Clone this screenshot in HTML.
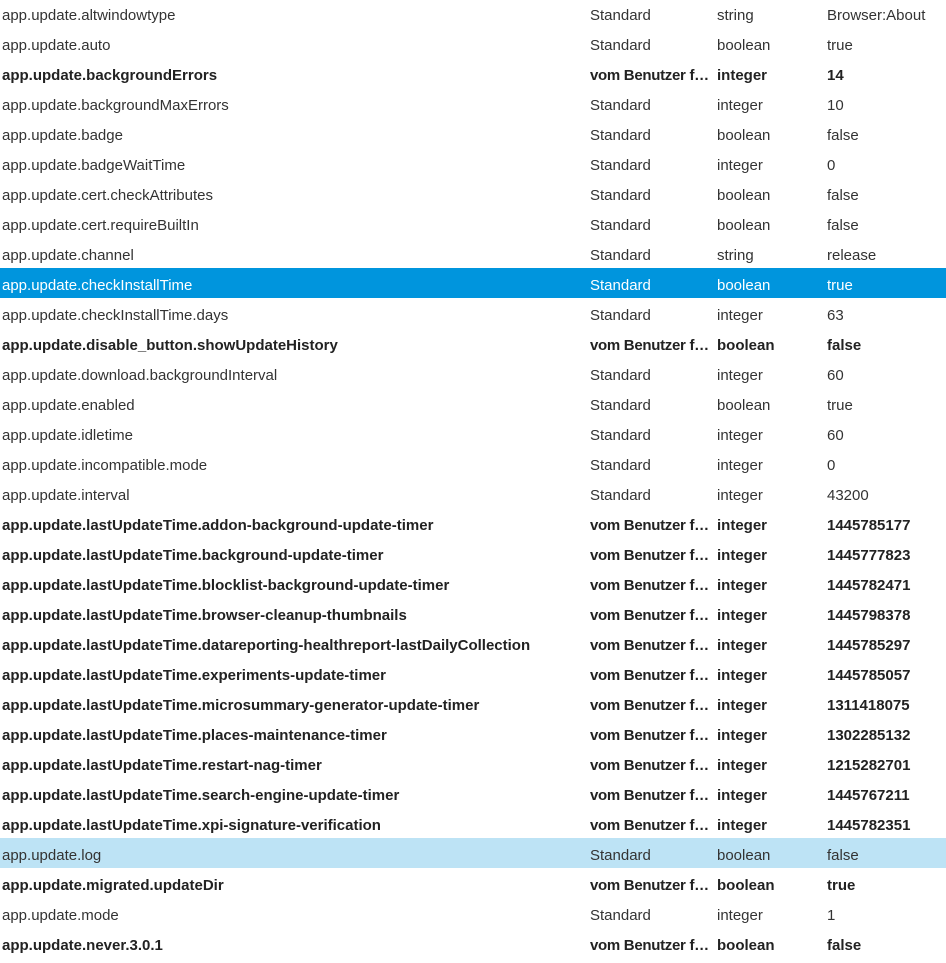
<!DOCTYPE html>
<html><head><meta charset="utf-8"><style>
html,body{margin:0;padding:0;background:#fff;width:946px;height:963px;overflow:hidden}
body{font-family:"Liberation Sans",sans-serif;font-size:15px;color:#333}
.w{margin-top:-2px}
.r{position:relative;height:30px;line-height:30px;white-space:nowrap}
.r span{position:absolute;top:3px}
.c1{left:2px}.c2{left:590px}.c3{left:717px}.c4{left:827px}
.b{font-weight:bold;color:#222}
.b .c2{letter-spacing:-0.3px}
.s{background:#0095dd;color:#fff}
.l{background:#bde3f5}
</style></head><body><div class="w">
<div class="r"><span class="c1">app.update.altwindowtype</span><span class="c2">Standard</span><span class="c3">string</span><span class="c4">Browser:About</span></div>
<div class="r"><span class="c1">app.update.auto</span><span class="c2">Standard</span><span class="c3">boolean</span><span class="c4">true</span></div>
<div class="r b"><span class="c1">app.update.backgroundErrors</span><span class="c2">vom Benutzer f…</span><span class="c3">integer</span><span class="c4">14</span></div>
<div class="r"><span class="c1">app.update.backgroundMaxErrors</span><span class="c2">Standard</span><span class="c3">integer</span><span class="c4">10</span></div>
<div class="r"><span class="c1">app.update.badge</span><span class="c2">Standard</span><span class="c3">boolean</span><span class="c4">false</span></div>
<div class="r"><span class="c1">app.update.badgeWaitTime</span><span class="c2">Standard</span><span class="c3">integer</span><span class="c4">0</span></div>
<div class="r"><span class="c1">app.update.cert.checkAttributes</span><span class="c2">Standard</span><span class="c3">boolean</span><span class="c4">false</span></div>
<div class="r"><span class="c1">app.update.cert.requireBuiltIn</span><span class="c2">Standard</span><span class="c3">boolean</span><span class="c4">false</span></div>
<div class="r"><span class="c1">app.update.channel</span><span class="c2">Standard</span><span class="c3">string</span><span class="c4">release</span></div>
<div class="r s"><span class="c1">app.update.checkInstallTime</span><span class="c2">Standard</span><span class="c3">boolean</span><span class="c4">true</span></div>
<div class="r"><span class="c1">app.update.checkInstallTime.days</span><span class="c2">Standard</span><span class="c3">integer</span><span class="c4">63</span></div>
<div class="r b"><span class="c1">app.update.disable_button.showUpdateHistory</span><span class="c2">vom Benutzer f…</span><span class="c3">boolean</span><span class="c4">false</span></div>
<div class="r"><span class="c1">app.update.download.backgroundInterval</span><span class="c2">Standard</span><span class="c3">integer</span><span class="c4">60</span></div>
<div class="r"><span class="c1">app.update.enabled</span><span class="c2">Standard</span><span class="c3">boolean</span><span class="c4">true</span></div>
<div class="r"><span class="c1">app.update.idletime</span><span class="c2">Standard</span><span class="c3">integer</span><span class="c4">60</span></div>
<div class="r"><span class="c1">app.update.incompatible.mode</span><span class="c2">Standard</span><span class="c3">integer</span><span class="c4">0</span></div>
<div class="r"><span class="c1">app.update.interval</span><span class="c2">Standard</span><span class="c3">integer</span><span class="c4">43200</span></div>
<div class="r b"><span class="c1">app.update.lastUpdateTime.addon-background-update-timer</span><span class="c2">vom Benutzer f…</span><span class="c3">integer</span><span class="c4">1445785177</span></div>
<div class="r b"><span class="c1">app.update.lastUpdateTime.background-update-timer</span><span class="c2">vom Benutzer f…</span><span class="c3">integer</span><span class="c4">1445777823</span></div>
<div class="r b"><span class="c1">app.update.lastUpdateTime.blocklist-background-update-timer</span><span class="c2">vom Benutzer f…</span><span class="c3">integer</span><span class="c4">1445782471</span></div>
<div class="r b"><span class="c1">app.update.lastUpdateTime.browser-cleanup-thumbnails</span><span class="c2">vom Benutzer f…</span><span class="c3">integer</span><span class="c4">1445798378</span></div>
<div class="r b"><span class="c1">app.update.lastUpdateTime.datareporting-healthreport-lastDailyCollection</span><span class="c2">vom Benutzer f…</span><span class="c3">integer</span><span class="c4">1445785297</span></div>
<div class="r b"><span class="c1">app.update.lastUpdateTime.experiments-update-timer</span><span class="c2">vom Benutzer f…</span><span class="c3">integer</span><span class="c4">1445785057</span></div>
<div class="r b"><span class="c1">app.update.lastUpdateTime.microsummary-generator-update-timer</span><span class="c2">vom Benutzer f…</span><span class="c3">integer</span><span class="c4">1311418075</span></div>
<div class="r b"><span class="c1">app.update.lastUpdateTime.places-maintenance-timer</span><span class="c2">vom Benutzer f…</span><span class="c3">integer</span><span class="c4">1302285132</span></div>
<div class="r b"><span class="c1">app.update.lastUpdateTime.restart-nag-timer</span><span class="c2">vom Benutzer f…</span><span class="c3">integer</span><span class="c4">1215282701</span></div>
<div class="r b"><span class="c1">app.update.lastUpdateTime.search-engine-update-timer</span><span class="c2">vom Benutzer f…</span><span class="c3">integer</span><span class="c4">1445767211</span></div>
<div class="r b"><span class="c1">app.update.lastUpdateTime.xpi-signature-verification</span><span class="c2">vom Benutzer f…</span><span class="c3">integer</span><span class="c4">1445782351</span></div>
<div class="r l"><span class="c1">app.update.log</span><span class="c2">Standard</span><span class="c3">boolean</span><span class="c4">false</span></div>
<div class="r b"><span class="c1">app.update.migrated.updateDir</span><span class="c2">vom Benutzer f…</span><span class="c3">boolean</span><span class="c4">true</span></div>
<div class="r"><span class="c1">app.update.mode</span><span class="c2">Standard</span><span class="c3">integer</span><span class="c4">1</span></div>
<div class="r b"><span class="c1">app.update.never.3.0.1</span><span class="c2">vom Benutzer f…</span><span class="c3">boolean</span><span class="c4">false</span></div>
</div></body></html>
